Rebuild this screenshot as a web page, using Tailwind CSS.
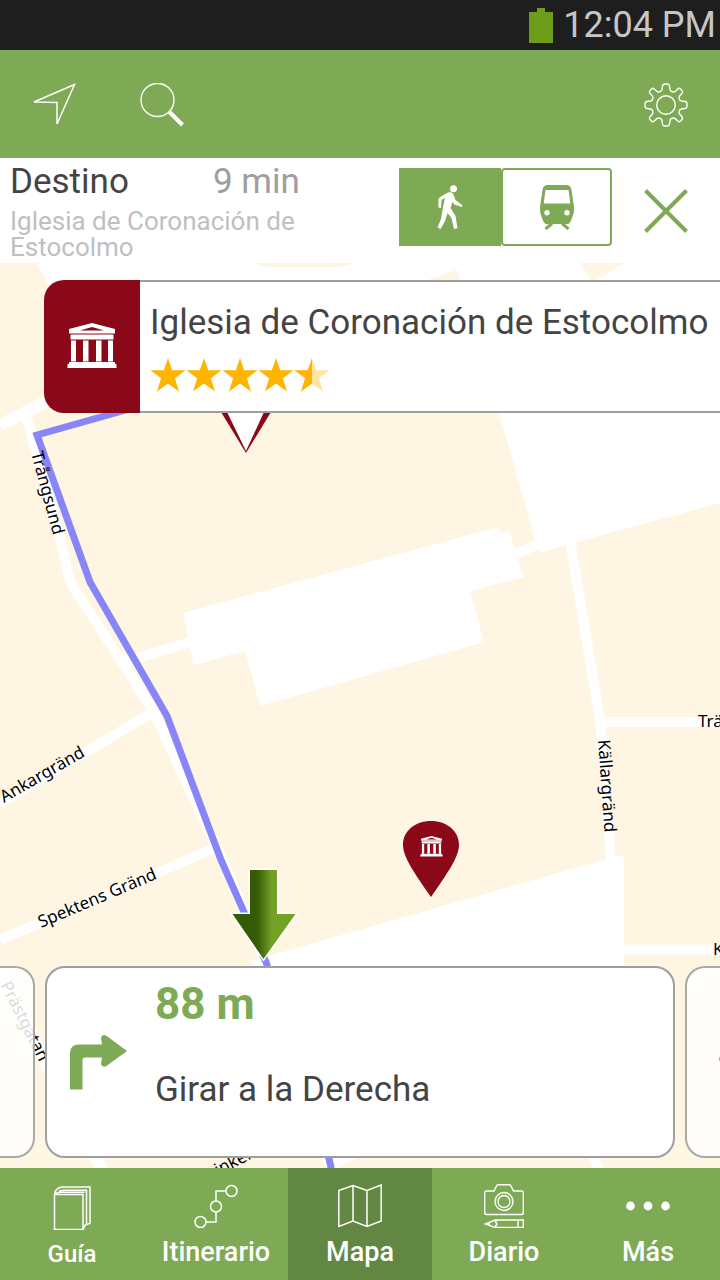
<!DOCTYPE html>
<html lang="es">
<head>
    <meta charset="UTF-8">
    <meta name="viewport" content="width=device-width, initial-scale=1.0">
    <title>Mapa | Destino</title>
    <script src="https://cdn.jsdelivr.net/npm/@tailwindcss/browser@4"></script>
</head>
<body class="min-h-screen flex flex-col bg-white font-[Roboto,sans-serif] text-[#444444] overflow-x-hidden">
    <!-- Shared shapes -->
    <svg class="hidden" aria-hidden="true">
        <symbol id="temple" viewBox="0 0 50 46">
            <path fill="currentColor" fill-rule="evenodd" d="M25 0 48 6v4.500H2V6ZM25 4 13 7.500h24ZM3.500 11.500h43v5h-43ZM4 17.500h5v21H4ZM16 17.500h5.500v21H16ZM29 17.500h5.500v21H29ZM41 17.500h5v21h-5ZM2 39h46v2h1.500v4H.5v-4H2Z" />
        </symbol>
        <symbol id="star" viewBox="0 0 36 36">
            <path fill="currentColor" d="M18 1l4.200 12.300h13.300L24.900 21.300 29 34.500 18 26.500 7 34.500l4.100-13.200L.5 13.300h13.300Z" />
        </symbol>
    </svg>

    <!-- Status bar -->
    <div class="flex h-[50px] items-center justify-end gap-[10px] bg-[#1e1e1e] pr-1">
        <svg class="h-[35px] w-6" viewBox="0 0 24 35" fill="#6e9e19" aria-hidden="true"><path d="M8 0h8v4h8v31H0V4h8Z" /></svg>
        <span class="text-4xl text-[#c6c6c6]">12:04 PM</span>
    </div>

    <!-- Toolbar -->
    <header class="flex h-[108px] items-center bg-[#7eaa55] px-8 pt-0.5 text-white">
        <button type="button" aria-label="Mi ubicación" class="mr-16">
            <svg class="size-11" viewBox="0 0 44 44" fill="none" stroke="currentColor" stroke-width="1.500"><path d="M2 19 42.500 1.500 25 41V19.500Z" /></svg>
        </button>
        <button type="button" aria-label="Buscar">
            <svg class="size-11" viewBox="0 0 44 44" fill="none" stroke="currentColor"><circle cx="17.500" cy="17" r="16.500" stroke-width="1.400" /><path d="M29 28.500 42.500 42" stroke-width="4" /></svg>
        </button>
        <button type="button" aria-label="Ajustes" class="ml-auto">
            <svg class="size-11" viewBox="0 0 44 44" fill="none" stroke="currentColor" stroke-width="1.400" stroke-linejoin="round">
                <circle cx="22" cy="22" r="9.300" />
                <path d="M18.500 3q.3-2 2-2h3q1.700 0 2 2l.5 3.500q.3 1.800 2 2.200 1.800.7 3.300-.5L34 5.800q1.300-1 2.500.2l1.500 1.500q1.200 1.200.2 2.500l-2.400 2.700q-1.200 1.500-.5 3.300.4 1.700 2.200 2l3.500.5q2 .3 2 2v3q0 1.700-2 2l-3.500.5q-1.800.3-2.200 2-.7 1.800.5 3.300l2.400 2.700q1 1.300-.2 2.500L36.500 38q-1.200 1.200-2.500.2l-2.700-2.400q-1.500-1.200-3.300-.5-1.700.4-2 2.200l-.5 3.500q-.3 2-2 2h-3q-1.700 0-2-2l-.5-3.500q-.3-1.800-2-2.200-1.800-.7-3.300.5L10 38.200q-1.300 1-2.500-.2L6 36.500q-1.200-1.200-.2-2.500l2.400-2.700q1.200-1.500.5-3.300-.4-1.700-2.200-2L3 25.500q-2-.3-2-2v-3q0-1.700 2-2l3.500-.5q1.800-.3 2.200-2 .7-1.800-.5-3.300L5.800 10q-1-1.300.2-2.500L7.500 6Q8.700 4.800 10 5.800l2.700 2.400q1.500 1.200 3.300.5 1.700-.4 2-2.200Z" />
            </svg>
        </button>
    </header>

    <!-- Destination -->
    <section class="flex h-[105px] pt-[10px] pr-8 pl-[10px]">
        <div class="-mt-2 min-w-0 flex-1">
            <div class="flex">
                <h1 class="w-[203px] text-[35px] leading-[44px]">Destino</h1>
                <span class="text-[35px] leading-[44px] text-[#9e9e9e]">9 min</span>
            </div>
            <p class="mt-1 w-[320px] text-[26px] leading-[26px] text-[#bfbfbf]">Iglesia de Coronación de Estocolmo</p>
        </div>
        <div class="flex h-[78px]">
            <button type="button" aria-label="A pie" aria-pressed="true" class="flex w-[102px] items-center justify-center bg-[#7eaa55] text-white">
                <svg class="h-11 w-[26px]" viewBox="0 0 26 44" fill="currentColor"><circle cx="16.500" cy="3.800" r="3.500" /><path d="M3 12 11 7.500q3-1 5 1L18.500 15l6 4.500q1.500 1 .5 2.500L17.500 19.500 15.500 17 13.500 23 18.500 31 20.500 43.200 17 44 14.500 33 10.500 28 8 36 3.500 44 .5 42.500 4 34 6 22 8 13 4.500 15 4 23 1.500 22.500 1.500 14Z" /></svg>
            </button>
            <button type="button" aria-label="Transporte público" aria-pressed="false" class="flex w-[111px] items-center justify-center rounded-sm border-2 border-[#7eaa55] text-[#7eaa55]">
                <svg class="h-[45px] w-9" viewBox="0 0 36 45" fill="currentColor"><path fill-rule="evenodd" d="M9 0h18q5 0 5.500 5l2.500 17q.5 6-2 11-2 6-4.500 6h-21Q5 39 3 33 .5 28 1 22L3.500 5Q4 0 9 0ZM6.500 5 4.700 18.500h26.600L29.500 5ZM8 25a2.700 2.700 0 1 0 0 5.400a2.700 2.700 0 1 0 0-5.400ZM28 25a2.700 2.700 0 1 0 0 5.400a2.700 2.700 0 1 0 0-5.400Z" /><path fill="none" stroke="currentColor" stroke-width="3" d="M13 38.500 6.500 44M23 38.500 29.500 44" /></svg>
            </button>
        </div>
        <button type="button" aria-label="Cerrar" class="ml-8 flex h-[86px] items-center text-[#7eaa55]">
            <svg class="size-11" viewBox="0 0 44 44" stroke="currentColor" stroke-width="4"><path d="M1.500 1.500 42.500 42.500M42.500 1.500 1.500 42.500" /></svg>
        </button>
    </section>

    <!-- Map -->
    <main class="relative flex min-h-[905px] flex-1 flex-col justify-between overflow-hidden bg-[#fff5e3]">
        <svg class="absolute inset-0 size-full" viewBox="0 263 720 905" preserveAspectRatio="xMidYMid slice" role="img" aria-label="Mapa de la ruta">
            <defs>
                <linearGradient id="arrowFill" x1="232" x2="296" y1="0" y2="0" gradientUnits="userSpaceOnUse">
                    <stop offset="0.350" stop-color="#355a05" />
                    <stop offset="0.420" stop-color="#3a6206" />
                    <stop offset="0.620" stop-color="#72a125" />
                </linearGradient>
            </defs>
            <!-- squares and buildings -->
            <g fill="#fff">
                <path d="M37 263H253L268 267H340L357 263H580L592 281H428L460 280 457 270 428 280V300H47L50 288Z" />
                <path d="M625 263H720V300H560L596 280Z" />
                <path d="M499 412 535 540 540 553 565 545 720 503V412Z" />
                <path d="M183 613 498 527 501 533 509 531 524 577 470 591 484 642 260 706 245 651 194 665Z" />
                <path d="M251 961 607 859 624 855V1000H260Z" />
                <path d="M316 1150H375L336 1168H326Z" />
            </g>
            <path fill="#fff5e3" d="M428 280 457 270 460 281H428Z" />
            <!-- streets -->
            <g fill="none" stroke="#fff" stroke-width="10">
                <path stroke-width="12" d="M0 425 55 397" />
                <path d="M26 415 58 530 70 582 122 662 153 710 198 808 222 858 262 955" />
                <path d="M125 662 190 642M155 711 0 803" />
                <path d="M215 848 0 940M516 554 540 543M570 540 600 720 611 862M600 722H720M620 949.500H720" />
                <path stroke-width="12" d="M0 970 45 1062 103 1172" />
                <path d="M590 1150 600 1172" />
            </g>
            <!-- route -->
            <path fill="none" stroke="#8785f7" stroke-width="7" d="M140 406 37 435 90 582 167 716 221 860 266 962 328 1154 332 1172" />
            <g font-family="Noto Sans, sans-serif" font-size="17" fill="#000">
                <text transform="translate(31 453) rotate(75)">Trångsund</text>
                <text transform="translate(4 803) rotate(-30)">Ankargränd</text>
                <text transform="translate(41 928) rotate(-23)">Spektens Gränd</text>
                <text transform="translate(598 740) rotate(86)">Källargränd</text>
                <text transform="translate(0 985) rotate(63)">Prästgatan</text>
                <text transform="translate(202 1184) rotate(-27)">Brinken</text>
                <text x="698" y="727">Trädgårdsgatan</text>
                <text x="713" y="955">Köpmangatan</text>
            </g>
            <!-- pins -->
            <path fill="#8a0817" d="M221 412 246 453 271 412Z" />
            <path fill="#fff" d="M227 412 246 451 264 412Z" />
            <path fill="#8a0817" d="M431 821c16 0 28 10 28 24 0 12-12 29-28 52-16-23-28-40-28-52 0-14 12-24 28-24Z" />
            <use href="#temple" x="420" y="836" width="23" height="21" color="#fff" />
            <path fill="url(#arrowFill)" stroke="#fff" stroke-width="3" paint-order="stroke" d="M250 870H277V914H295.500L263.500 959 232.500 914H250Z" />
        </svg>

        <!-- Place card -->
        <a href="#" class="relative mt-[17px] ml-11 flex h-[133px] overflow-hidden rounded-l-[20px] bg-white">
            <span class="flex w-24 shrink-0 items-center justify-center bg-[#8a0817] pb-0.5 text-white">
                <svg class="h-[46px] w-[50px]" aria-hidden="true"><use href="#temple" /></svg>
            </span>
            <span class="flex-1 border-y-2 border-[#9e9e9e] pt-[18px] pl-[10px]">
                <span class="block text-[35px] leading-[46px] whitespace-nowrap">Iglesia de Coronación de Estocolmo</span>
                <span class="mt-[11px] flex text-[#ffb400]" role="img" aria-label="4,5 de 5 estrellas">
                    <svg class="size-9"><use href="#star" /></svg>
                    <svg class="size-9"><use href="#star" /></svg>
                    <svg class="size-9"><use href="#star" /></svg>
                    <svg class="size-9"><use href="#star" /></svg>
                    <svg class="size-9" viewBox="0 0 36 36">
                        <use href="#star" opacity="0.350" />
                        <path fill="currentColor" d="M18 1v25.500L7 34.500l4.100-13.200L.5 13.300h13.300Z" />
                    </svg>
                </span>
            </span>
        </a>

        <!-- Route steps -->
        <div class="relative mb-[10px] flex h-48 gap-[10px]">
            <div class="w-[35px] rounded-r-[20px] border-2 border-l-0 border-[#a9a8a5] bg-white/85"></div>
            <article class="flex flex-1 items-start rounded-[20px] border-2 border-[#9e9e9e] bg-white">
                <svg class="mt-[67px] ml-[23px] h-[55px] w-[57px] shrink-0" viewBox="0 0 57 55" fill="#7eaa55" aria-hidden="true"><path d="M0 54.500V18q0-8.500 9-8.500h23L31 3q1-4 5-2.500L57 16 36 31.200q-4 1.500-5-2.200l1-6.500H15q-2.500 0-2.500 3v29Z" /></svg>
                <div class="ml-7 pt-3">
                    <p class="text-[44px] leading-[48px] font-bold text-[#7eaa55]">88 m</p>
                    <p class="mt-[38px] text-[35px] leading-[48px]">Girar a la Derecha</p>
                </div>
            </article>
            <div class="flex w-[35px] items-center justify-end rounded-l-[20px] border-2 border-r-0 border-[#a9a8a5] bg-white/85">
                <span class="mt-[-6px] h-1 w-px bg-[#a9b98f]"></span>
            </div>
        </div>
    </main>

    <!-- Tabs -->
    <nav class="grid h-28 grid-cols-5 bg-[#7eaa55] text-[27px] leading-8 font-medium text-white">
        <a href="#" class="flex flex-col items-center gap-2 pt-[18px]">
            <svg class="h-11 w-[38px]" viewBox="0 0 38 44" fill="none" stroke="currentColor" stroke-width="1.500"><path d="M1.500 8.500H30V43.500H1.500V8Q3 1 10 1H37V37.500L33 38.500M6 5Q8 4.200 12 4.200H33.500V38.500Q31.500 39 30.500 43M3 7.500Q4 6.200 8 6.200H31.500" /></svg>
            <span class="text-[24px]">Guía</span>
        </a>
        <a href="#" class="flex flex-col items-center gap-2 pt-4">
            <svg class="size-11" viewBox="0 0 44 44" fill="none" stroke="currentColor" stroke-width="1.500"><circle cx="37.500" cy="7" r="5.500" /><circle cx="22" cy="22.500" r="5.500" /><circle cx="6.500" cy="38" r="5.500" /><path d="M32 7H22V17M22 28V38H12" /></svg>
            <span>Itinerario</span>
        </a>
        <a href="#" aria-current="page" class="flex flex-col items-center gap-2 bg-[#628743] pt-4">
            <svg class="size-11" viewBox="0 0 44 44" fill="none" stroke="currentColor" stroke-width="1.500"><path d="M.8 6.500 15 1.500 29 6.500 43.200 1V37L29 42.500 15 37 .8 42.500ZM15 1.500V37M29 6.500V42.500" /></svg>
            <span>Mapa</span>
        </a>
        <a href="#" class="flex flex-col items-center gap-2 pt-4">
            <svg class="h-11 w-10" viewBox="0 0 40 44" fill="none" stroke="currentColor" stroke-width="1.400"><path d="M2 7H10L12.500 2Q13 .8 14 .8H25.500Q26.500.8 27 2L29.500 7H37.500Q39.300 7 39.300 9V28.500Q39.300 30.500 37.500 30.500H2.500Q.7 30.500 .7 28.500V9Q.7 7 2 7Z" /><circle cx="20" cy="17.500" r="9" /><circle cx="20" cy="17.500" r="6" /><path d="M1.500 40 11 36H39.300V43.500H11ZM13 36 11.500 38 13 40 11.500 42 13 43.500M34 36V43.500M1.500 40H6" /></svg>
            <span>Diario</span>
        </a>
        <a href="#" class="flex flex-col items-center gap-2 pt-4">
            <svg class="size-11" viewBox="0 0 44 44" fill="currentColor"><circle cx="4.500" cy="22" r="4.400" /><circle cx="22" cy="22" r="4.400" /><circle cx="39.500" cy="22" r="4.400" /></svg>
            <span>Más</span>
        </a>
    </nav>
</body>
</html>
